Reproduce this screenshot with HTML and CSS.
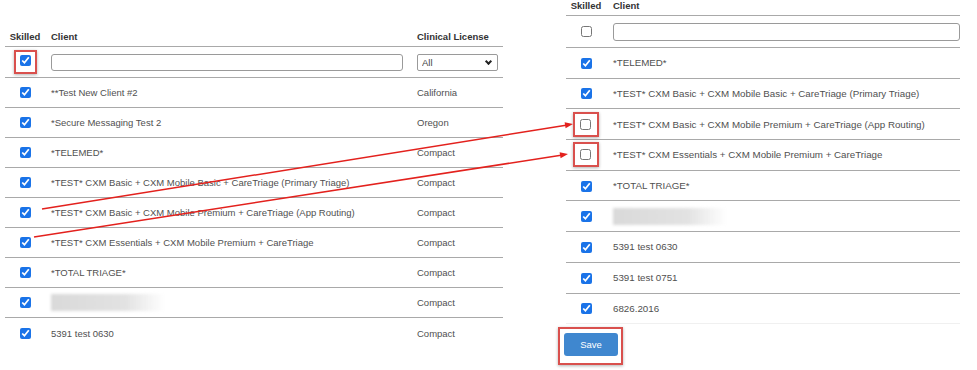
FILE: index.html
```html
<!doctype html>
<html lang="en">
<head>
    <meta charset="UTF-8">
    <title>Client Skills</title>
    <link rel="stylesheet" href="styles.css">
</head>
<body>

<div class="page">
    <section class="panel panel-left">
        <table class="grid grid-left">
            <thead>
            <tr>
                <th class="col-skill">Skilled</th>
                <th class="col-client">Client</th>
                <th class="col-lic">Clinical License</th>
            </tr>
            </thead>
            <tbody>
            <tr class="filter">
                <td class="col-skill"><span class="mark mark-head"><input type="checkbox" checked></span></td>
                <td class="col-client"><input type="text" class="search"></td>
                <td class="col-lic"><span class="select-wrap"><select class="lic-select"><option>All</option></select></span></td>
            </tr>
            <tr><td class="col-skill"><input type="checkbox" checked></td><td class="col-client">**Test New Client #2</td><td class="col-lic">California</td></tr>
            <tr><td class="col-skill"><input type="checkbox" checked></td><td class="col-client">*Secure Messaging Test 2</td><td class="col-lic">Oregon</td></tr>
            <tr><td class="col-skill"><input type="checkbox" checked></td><td class="col-client">*TELEMED*</td><td class="col-lic">Compact</td></tr>
            <tr><td class="col-skill"><input type="checkbox" checked></td><td class="col-client">*TEST* CXM Basic + CXM Mobile Basic + CareTriage (Primary Triage)</td><td class="col-lic">Compact</td></tr>
            <tr><td class="col-skill"><input type="checkbox" checked></td><td class="col-client">*TEST* CXM Basic + CXM Mobile Premium + CareTriage (App Routing)</td><td class="col-lic">Compact</td></tr>
            <tr><td class="col-skill"><input type="checkbox" checked></td><td class="col-client">*TEST* CXM Essentials + CXM Mobile Premium + CareTriage</td><td class="col-lic">Compact</td></tr>
            <tr><td class="col-skill"><input type="checkbox" checked></td><td class="col-client">*TOTAL TRIAGE*</td><td class="col-lic">Compact</td></tr>
            <tr><td class="col-skill"><input type="checkbox" checked></td><td class="col-client"><span class="blurred"></span></td><td class="col-lic">Compact</td></tr>
            <tr class="last"><td class="col-skill"><input type="checkbox" checked></td><td class="col-client">5391 test 0630</td><td class="col-lic">Compact</td></tr>
            </tbody>
        </table>
    </section>

    <section class="panel panel-right">
        <table class="grid grid-right">
            <thead>
            <tr>
                <th class="col-skill">Skilled</th>
                <th class="col-client">Client</th>
            </tr>
            </thead>
            <tbody>
            <tr class="filter">
                <td class="col-skill"><input type="checkbox"></td>
                <td class="col-client"><input type="text" class="search"></td>
            </tr>
            <tr><td class="col-skill"><input type="checkbox" checked></td><td class="col-client">*TELEMED*</td></tr>
            <tr><td class="col-skill"><input type="checkbox" checked></td><td class="col-client">*TEST* CXM Basic + CXM Mobile Basic + CareTriage (Primary Triage)</td></tr>
            <tr><td class="col-skill"><span class="mark mark-row"><input type="checkbox"></span></td><td class="col-client">*TEST* CXM Basic + CXM Mobile Premium + CareTriage (App Routing)</td></tr>
            <tr><td class="col-skill"><span class="mark mark-row"><input type="checkbox"></span></td><td class="col-client">*TEST* CXM Essentials + CXM Mobile Premium + CareTriage</td></tr>
            <tr><td class="col-skill"><input type="checkbox" checked></td><td class="col-client">*TOTAL TRIAGE*</td></tr>
            <tr><td class="col-skill"><input type="checkbox" checked></td><td class="col-client"><span class="blurred"></span></td></tr>
            <tr><td class="col-skill"><input type="checkbox" checked></td><td class="col-client">5391 test 0630</td></tr>
            <tr><td class="col-skill"><input type="checkbox" checked></td><td class="col-client">5391 test 0751</td></tr>
            <tr class="last"><td class="col-skill"><input type="checkbox" checked></td><td class="col-client">6826.2016</td></tr>
            </tbody>
        </table>
        <div class="actions">
            <span class="mark mark-btn"><button class="btn-save">Save</button></span>
        </div>
    </section>

    <!-- annotation arrows -->
    <svg class="arrows" width="977" height="370" viewBox="0 0 977 370">
        <line x1="42" y1="209" x2="566" y2="125.3" stroke="#e3211d" stroke-width="1.5"/>
        <polygon points="573,124 565.6,128.2 564.6,122.3" fill="#e3211d"/>
        <line x1="34" y1="237" x2="561" y2="155.2" stroke="#e3211d" stroke-width="1.5"/>
        <polygon points="568,154 560.6,158.2 559.6,152.3" fill="#e3211d"/>
    </svg>
</div>

</body>
</html>
```

FILE: styles.css
```css
* {
    margin: 0;
    padding: 0;
    box-sizing: border-box;
}

body {
    font-family: "Liberation Sans", Arial, sans-serif;
    font-size: 9.5px;
    color: #505050;
    background-color: #ffffff;
}

.page {
    position: relative;
    display: flex;
    width: 977px;
    height: 370px;
    overflow: hidden;
}

.panel-left {
    margin-left: 5px;
    width: 498px;
    padding-top: 26px;
}

.panel-right {
    margin-left: 55px;
    width: 414px;
}

.grid {
    border-collapse: separate;
    border-spacing: 0;
    width: 100%;
    table-layout: fixed;
}

.grid th {
    font-weight: bold;
    color: #333333;
    text-align: left;
    border-bottom: 1px solid #a9a9a9;
    line-height: 11px;
}

.grid td {
    border-bottom: 1px solid #a9a9a9;
    vertical-align: middle;
    white-space: nowrap;
}

.grid .col-skill {
    width: 40px;
    text-align: center;
}

.grid input[type="checkbox"] {
    width: 11px;
    height: 11px;
    margin: 0;
    vertical-align: middle;
    accent-color: #1a73e8;
}

/* left table */

.grid-left th {
    height: 21px;
    vertical-align: middle;
}

.grid-left .col-client {
    width: 366px;
    padding-left: 6px;
}

.grid-left .col-lic {
    padding-left: 6px;
}

.grid-left .filter td {
    height: 31px;
}

.grid-left td {
    height: 30px;
}

.grid-left tr.last td {
    border-bottom: none;
}

.grid-left .search {
    width: 352px;
}

/* right table */

.grid-right {
    margin-left: 8px;
    width: 394px;
    font-size: 9.75px;
}

.grid-right th {
    height: 16px;
    vertical-align: top;
    font-size: 9.5px;
}

.grid-right .col-client {
    padding-left: 7px;
}

.grid-right .filter td {
    height: 32px;
}

.grid-right td {
    height: 30.7px;
}

.grid-right tr.last td {
    border-bottom-color: #f0f0f0;
}

.grid-right .search {
    width: 100%;
    height: 18px;
}

/* inputs */

.search {
    display: block;
    height: 17px;
    border: 1px solid #9a9a9a;
    border-radius: 3px;
    background-color: #ffffff;
}

.select-wrap {
    position: relative;
    display: block;
    width: 81px;
}

.select-wrap::after {
    content: "";
    position: absolute;
    right: 7px;
    top: 5px;
    width: 3px;
    height: 3px;
    border-right: 2px solid #222222;
    border-bottom: 2px solid #222222;
    transform: rotate(45deg);
    pointer-events: none;
}

.lic-select {
    display: block;
    width: 81px;
    height: 17px;
    padding-left: 4px;
    appearance: none;
    -webkit-appearance: none;
    font-family: inherit;
    font-size: 9.5px;
    color: #444444;
    border: 1px solid #9a9a9a;
    border-radius: 2px;
    background-color: #ffffff;
}

.blurred {
    display: block;
    width: 114px;
    height: 17px;
    background: linear-gradient(to right, #d9d9d9, #e2e2e2 65%, rgba(235, 235, 235, 0));
    filter: blur(1.5px);
}

/* red highlight boxes */

.mark {
    display: inline-flex;
    align-items: center;
    justify-content: center;
    vertical-align: middle;
    border: 2px solid #d9504d;
    box-shadow: 0 1px 3px rgba(0, 0, 0, 0.3);
}

.mark-head {
    padding: 3px 4px 6px 4px;
}

.mark-row {
    padding: 5px 6px 5px 5px;
}

.mark-btn {
    padding: 4px 3px 7px 4px;
}

.actions {
    margin-top: 3px;
}

.btn-save {
    width: 54px;
    height: 23px;
    border: none;
    border-radius: 3px;
    background-color: #3f87cf;
    color: #ffffff;
    font-family: inherit;
    font-size: 9.5px;
}

.arrows {
    position: absolute;
    left: 0;
    top: 0;
    pointer-events: none;
}
```
